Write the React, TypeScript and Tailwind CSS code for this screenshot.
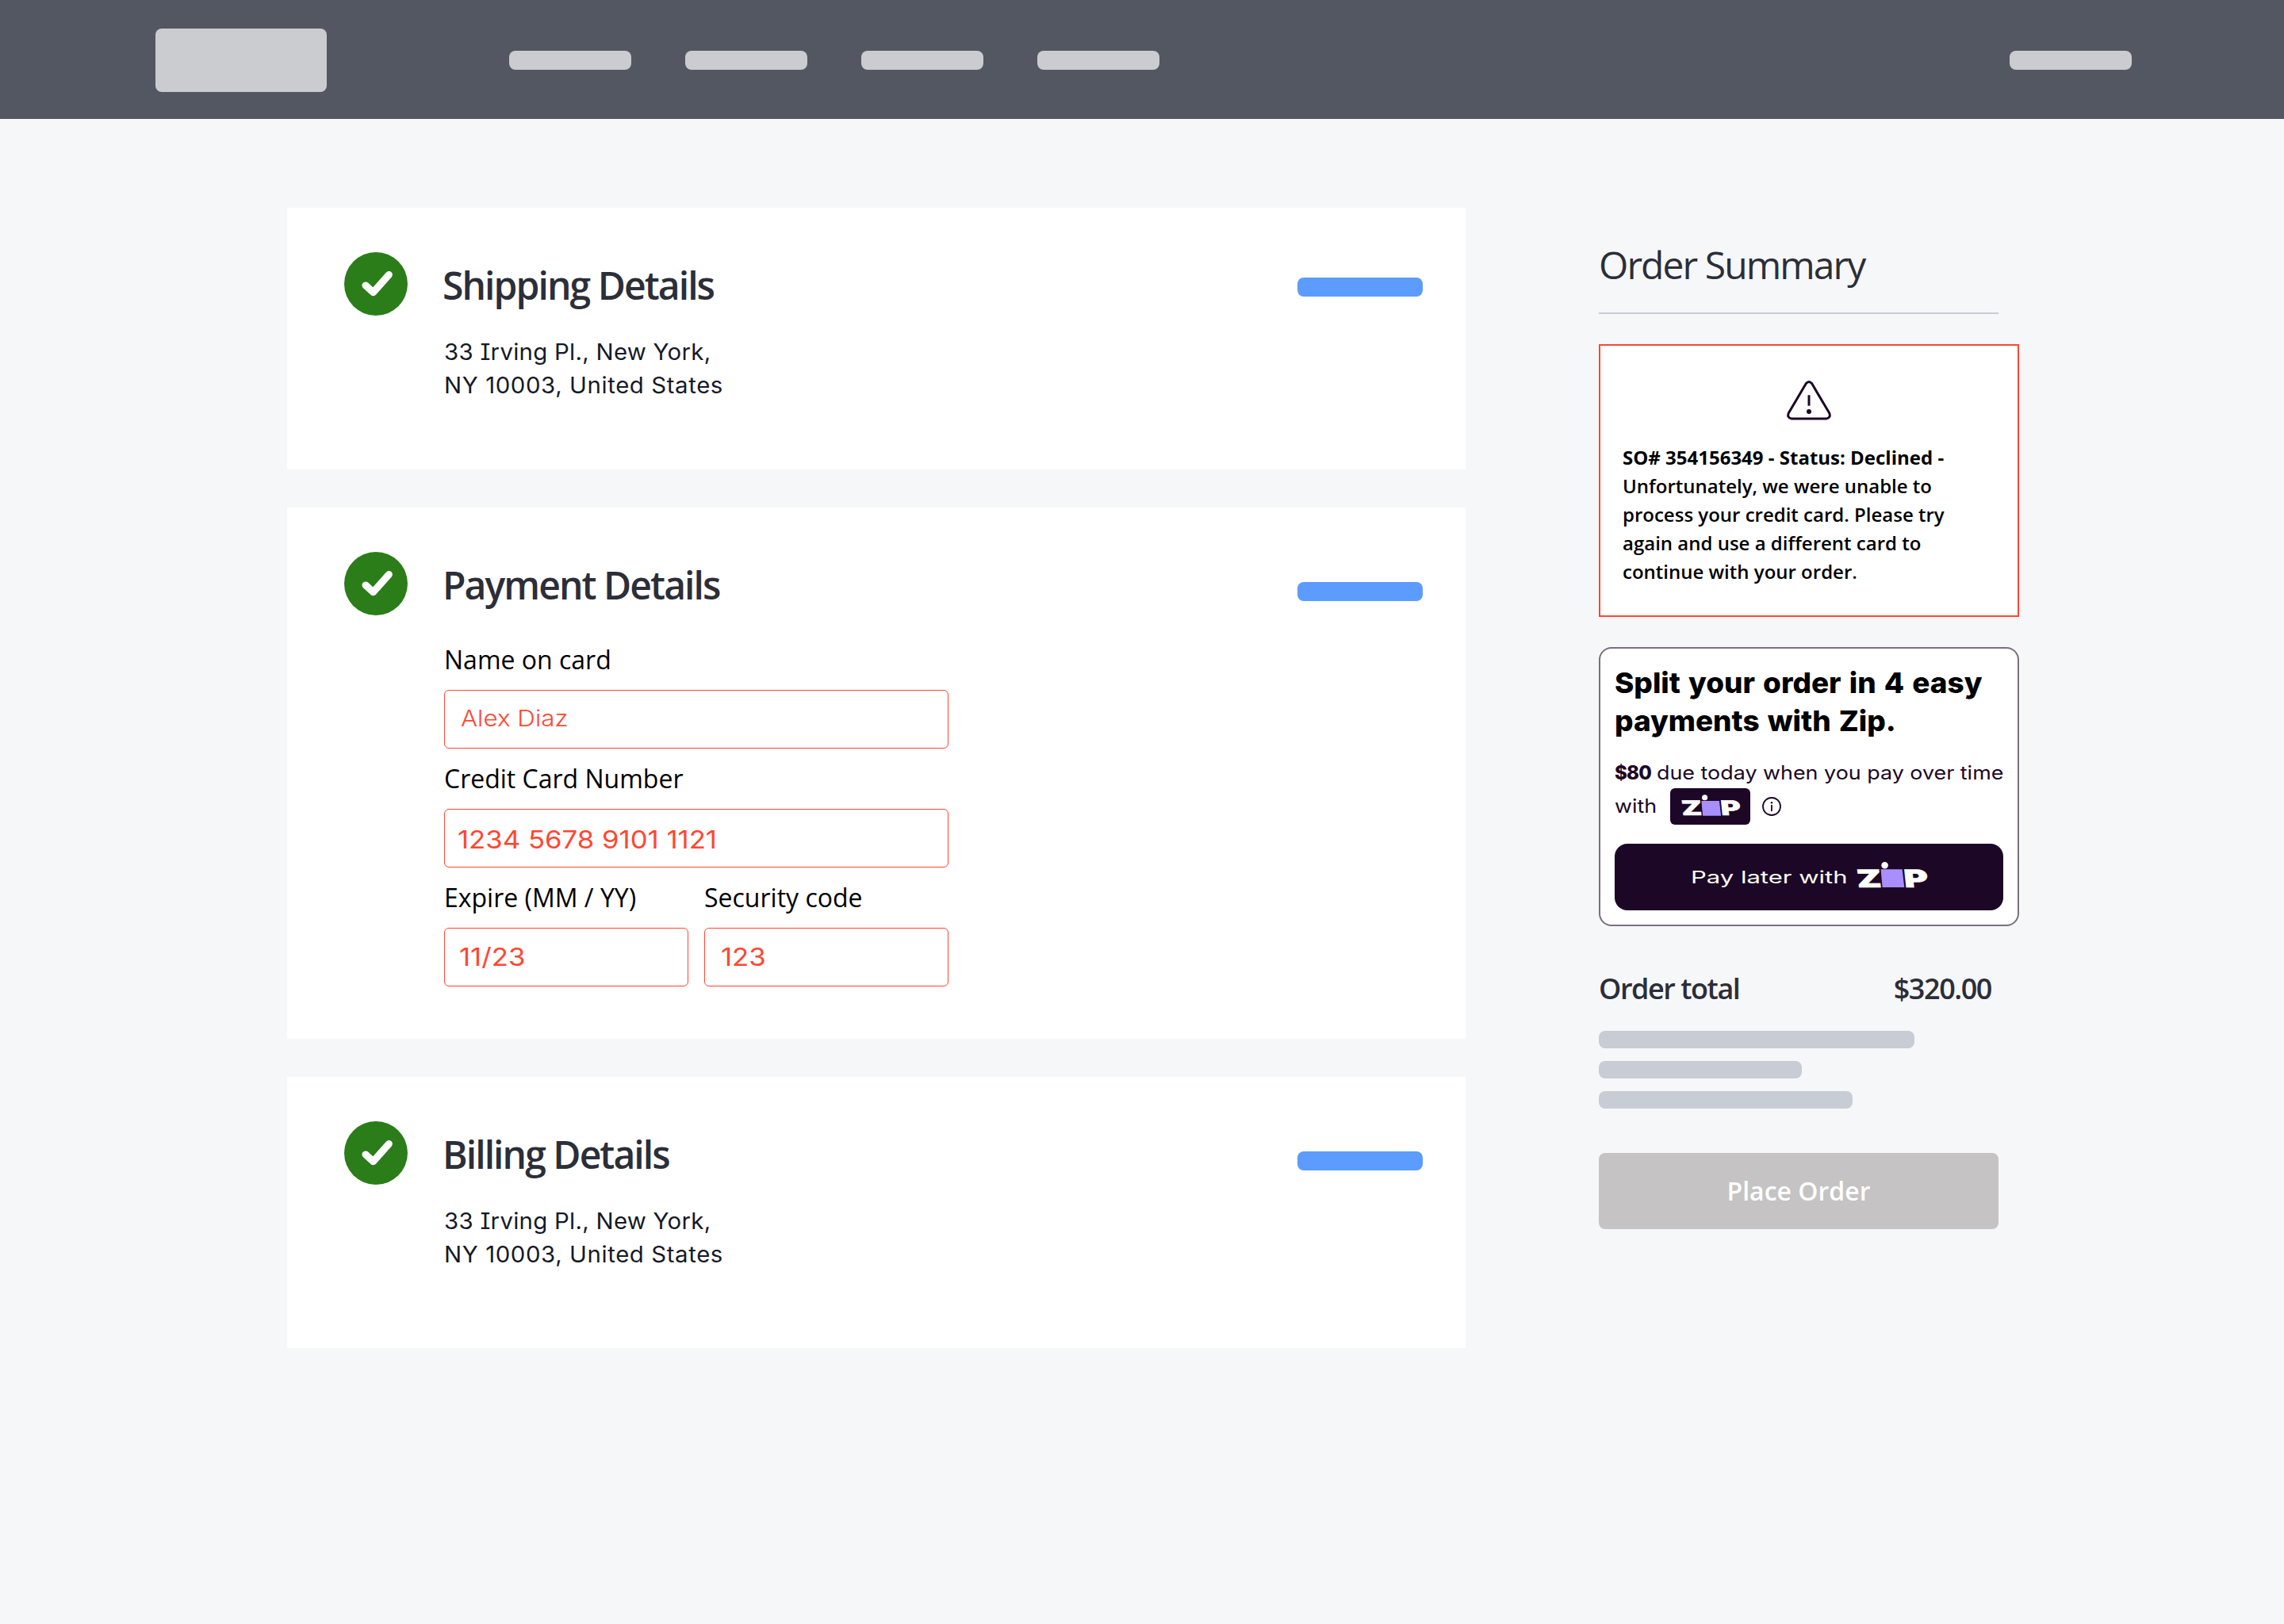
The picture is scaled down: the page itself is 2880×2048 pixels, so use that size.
import React from 'react';

const navItems = [1, 2, 3, 4];

const CheckBadge = () => (
  <svg viewBox="0 0 80 80" className="w-20 h-20 shrink-0">
    <circle cx="40" cy="40" r="40" fill="#2a7d19" />
    <path d="M27 41.9 L36.6 50.8 L56.4 28.4" fill="none" stroke="#fff" strokeWidth="9" strokeLinecap="round" strokeLinejoin="round" />
  </svg>
);

const WarningIcon = () => (
  <svg viewBox="0 0 56 50" className="w-14 h-[50px] mx-auto" fill="none" stroke="#1c0826" strokeWidth="3">
    <path d="M24.4 3.6 Q28 -0.6 31.6 3.6 L53.6 40.8 Q56 46.6 50.4 47.9 L5.6 47.9 Q0 46.6 2.4 40.8 Z" strokeLinejoin="round" />
    <path d="M28 18.3 V31.7" />
    <circle cx="28" cy="39" r="3" fill="#1c0826" stroke="none" />
  </svg>
);

const ZipLogo = ({ className }: { className: string }) => (
  <svg viewBox="0 0 89 32" className={`overflow-visible ${className}`}>
    <g fontFamily="Inter, sans-serif" fontWeight="900" fontSize="31" fill="#fffffa" stroke="#fffffa" strokeWidth="0.6">
      <text transform="translate(1.2 31.6) skewX(6) scale(1.45 1)">Z</text>
      <text transform="translate(60.8 31.6) skewX(6) scale(1.5 1)">P</text>
    </g>
    <path d="M30.6 9.3 H57.6 L60.3 31.9 H32.6 Z" fill="#a98eff" />
    <circle cx="35.6" cy="4.3" r="4.3" fill="#fffffa" />
  </svg>
);

const Card = ({ title, className, barClass, children }: { title: string; className: string; barClass: string; children: React.ReactNode }) => (
  <section className={`bg-white pt-14 pl-[72px] pr-[54px] flex items-start ${className}`}>
    <CheckBadge />
    <div className="ml-[46px] flex-1">
      <h2 className="mt-[10px] -ml-0.5 text-[48px] leading-[64px] font-semibold tracking-[-0.04em] text-[#2c2e38]">{title}</h2>
      {children}
    </div>
    <div className={`w-[158px] h-6 rounded-lg bg-[#5c9bff] ${barClass}`}></div>
  </section>
);

const Address = () => (
  <p className="mt-[31px] origin-left scale-x-[1.05] font-['Inter',sans-serif] text-[28px] leading-[42px] tracking-[0.02em] text-[#161a26] [font-feature-settings:'cv08']">
    <span className="tracking-[0.009em]">33 Irving Pl., New York,</span>
    <br />
    NY 10003, United States
  </p>
);

const Field = ({ label, value, valueClass }: { label: string; value: string; valueClass: string }) => (
  <div className="flex-1">
    <label className="block text-[32px] leading-10 text-black">{label}</label>
    <div className={`mt-[18px] h-[74px] flex items-center border border-[#ff4732] rounded-md font-['Inter',sans-serif] text-[#ff4732] ${valueClass}`}>
      <span className="origin-left scale-x-[1.12]">{value}</span>
    </div>
  </div>
);

export default function App() {
  return (
    <div className="w-[2880px] h-[2048px] overflow-hidden bg-[#f6f7f9] font-['Open_Sans',sans-serif]">
      <header className="h-[150px] bg-[#535762] pl-[196px] pr-48 pb-[1px] flex items-center">
        <div className="w-[216px] h-20 mt-[3px] rounded-lg bg-[#cbccd0]"></div>
        <nav className="ml-[230px] mt-[3px] flex gap-[68px]">
          {navItems.map((item) => (
            <div key={item} className="w-[154px] h-6 rounded-lg bg-[#cbccd0]"></div>
          ))}
        </nav>
        <div className="ml-auto mt-[3px] w-[154px] h-6 rounded-lg bg-[#cbccd0]"></div>
      </header>

      <main className="pt-28 pl-[362px] flex items-start">
        <div className="w-[1486px] flex flex-col gap-12">
          <Card title="Shipping Details" className="h-[330px]" barClass="mt-8">
            <Address />
          </Card>
          <Card title="Payment Details" className="h-[670px]" barClass="mt-[38px]">
            <div className="mt-[42px] w-[636px] flex flex-col gap-[18px]">
              <Field label="Name on card" value="Alex Diaz" valueClass="text-[28px] font-light pl-5 pb-[3px]" />
              <Field label="Credit Card Number" value="1234 5678 9101 1121" valueClass="text-[31px] pl-4 pt-[5px]" />
              <div className="flex gap-5">
                <Field label="Expire (MM / YY)" value="11/23" valueClass="text-[31px] pl-[18px]" />
                <Field label="Security code" value="123" valueClass="text-[31px] pl-5" />
              </div>
            </div>
          </Card>
          <Card title="Billing Details" className="h-[342px]" barClass="mt-[38px]">
            <Address />
          </Card>
        </div>

        <aside className="ml-[168px] w-[530px] pt-10">
          <h2 className="text-[48px] leading-[64px] tracking-[-0.04em] text-[#2c2e38]">Order Summary</h2>
          <div className="mt-7 w-[504px] h-0.5 bg-[#c8ccd5]"></div>

          <div className="mt-[38px] h-[344px] pt-11 pl-7 pr-7 border-2 border-[#ff4732] bg-white">
            <WarningIcon />
            <p className="mt-[29px] text-[24px] leading-9 font-semibold text-black whitespace-nowrap">
              <span className="font-bold">SO# 354156349 - Status: Declined -</span>
              <br />
              Unfortunately, we were unable to
              <br />
              process your credit card. Please try
              <br />
              again and use a different card to
              <br />
              continue with your order.
            </p>
          </div>

          <div className="mt-[38px] h-[352px] pt-[19px] px-[18px] border-2 border-[#7a6f7f] rounded-2xl bg-white font-['Inter',sans-serif] text-[#1c0826]">
            <h3 className="origin-left scale-x-[1.025] text-[36px] leading-[48px] font-extrabold [word-spacing:2px] text-black whitespace-nowrap">
              Split your order in 4 easy
              <br />
              payments with Zip.
            </h3>
            <p className="mt-[21px] flex text-[24px] leading-[42px] whitespace-nowrap">
              <span className="w-[53px] font-extrabold tracking-[-0.03em]">$80</span>
              <span className="origin-left scale-x-[1.12]">due today when you pay over time</span>
            </p>
            <div className="-mt-0.5 h-[46px] flex items-center text-[24px]">
              <span className="w-[70px]">
                <span className="inline-block origin-left scale-x-[1.12]">with</span>
              </span>
              <span className="w-[101px] h-[46px] pt-2 pl-3.5 rounded-md bg-[#1c0826]">
                <ZipLogo className="w-[74px] h-[27px]" />
              </span>
              <svg viewBox="0 0 24 24" className="ml-[15px] w-6 h-6" fill="none" stroke="#1c0826" strokeWidth="1.8">
                <circle cx="12" cy="12" r="11" />
                <path d="M12 10 V18" />
                <circle cx="12" cy="7.2" r="1.2" fill="#1c0826" stroke="none" />
              </svg>
            </div>
            <button className="mt-6 w-[490px] h-[84px] rounded-2xl bg-[#1c0826] text-[#fffffa] flex items-center">
              <span className="w-[209px] ml-[96px] text-left">
                <span className="inline-block origin-left scale-x-[1.41] text-[22px] whitespace-nowrap">Pay later with</span>
              </span>
              <ZipLogo className="w-[89px] h-8 mb-1.5" />
            </button>
          </div>

          <div className="mt-[55px] w-[495px] flex justify-between text-[36px] leading-[48px] font-semibold tracking-[-0.04em] text-[#2c2e38]">
            <span>Order total</span>
            <span>$320.00</span>
          </div>
          <div className="mt-[29px] flex flex-col gap-4">
            <div className="w-[398px] h-[22px] rounded-lg bg-[#c8ccd5]"></div>
            <div className="w-64 h-[22px] rounded-lg bg-[#c8ccd5]"></div>
            <div className="w-80 h-[22px] rounded-lg bg-[#c8ccd5]"></div>
          </div>
          <button className="mt-14 w-[504px] h-24 rounded-lg bg-[#c5c3c4] text-white text-[32px] font-semibold">Place Order</button>
        </aside>
      </main>
    </div>
  );
}
